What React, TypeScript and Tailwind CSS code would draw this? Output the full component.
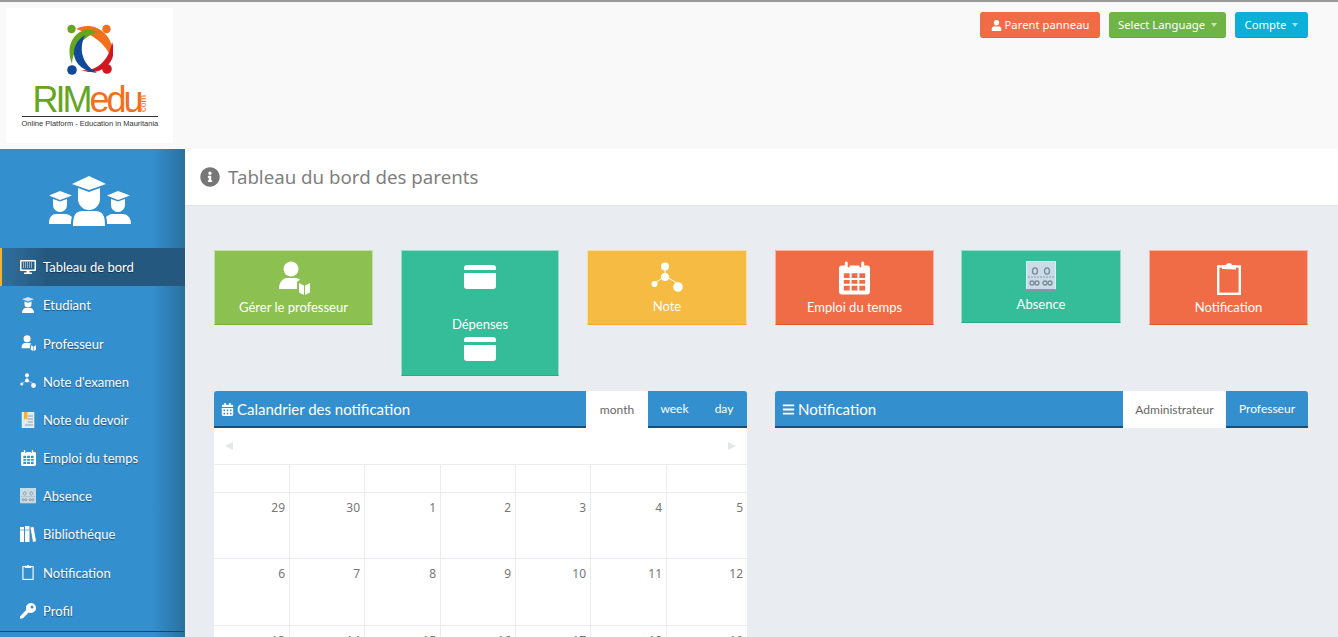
import React from "react";
import { FaInfoCircle, FaUser, FaBars, FaCalendarAlt } from "react-icons/fa";

type IconProps = { className?: string };

const PersonBook = ({ className }: IconProps) => (
  <svg viewBox="0 0 32 34" className={className} fill="currentColor">
    <circle cx="13" cy="8" r="7.5" />
    <path d="M1 28c0-7 4-11 8-11h8c2 0 4 .6 5 1.600l-3 2.400v7H1z" />
    <path d="M21 22l5 2.600V34l-5-2.600z" />
    <path d="M27 24.600l5-2.600v9.400L27 34z" />
  </svg>
);

const Card = ({ className }: IconProps) => (
  <svg viewBox="0 0 32 24" className={className} fill="currentColor">
    <path d="M3 0h26a3 3 0 0 1 3 3v2H0V3a3 3 0 0 1 3-3z" />
    <path d="M0 8h32v13a3 3 0 0 1-3 3H3a3 3 0 0 1-3-3z" />
  </svg>
);

const Nodes = ({ className }: IconProps) => (
  <svg viewBox="0 0 32 32" className={className} fill="currentColor" stroke="currentColor">
    <path d="M14 5v12M14 14L4 21M14 14l12 7" strokeWidth="1" fill="none" />
    <circle cx="14" cy="4.500" r="4" stroke="none" />
    <circle cx="14" cy="15" r="4" stroke="none" />
    <circle cx="3.500" cy="22" r="3" stroke="none" />
    <circle cx="27" cy="25" r="4.800" stroke="none" />
  </svg>
);

const Calendar = ({ className }: IconProps) => (
  <svg viewBox="0 0 32 34" className={className}>
    <path fill="currentColor" fillRule="evenodd" d="M3 4h3V1.500a1.500 1.500 0 0 1 3 0V6h2V4h10v2h2V1.500a1.500 1.500 0 0 1 3 0V4h3a3 3 0 0 1 3 3v24a3 3 0 0 1-3 3H3a3 3 0 0 1-3-3V7a3 3 0 0 1 3-3zM5 12v5h6v-5zm8 0v5h6v-5zm8 0v5h6v-5zM5 19v4h6v-4zm8 0v4h6v-4zm8 0v4h6v-4zM5 25v5h6v-5zm8 0v5h6v-5zm8 0v5h6v-5z" />
  </svg>
);

const Clipboard = ({ className }: IconProps) => (
  <svg viewBox="0 0 24 34" className={className} fill="none" stroke="currentColor">
    <rect x="1.200" y="5.500" width="21.600" height="27.300" strokeWidth="2.400" />
    <path d="M6 7V5h3.500a2.600 2.600 0 0 1 5 0H18v2.500z" fill="currentColor" strokeWidth="2" />
  </svg>
);

const AbsenceIcon = ({ className }: IconProps) => (
  <svg viewBox="0 0 30 30" className={className}>
    <rect x="0.500" y="0.500" width="29" height="29" fill="#c9dce8" stroke="#dcecf5" />
    <rect x="0" y="28" width="30" height="2" fill="#7f9aa8" />
    <g fill="none" stroke="#7a8a94" strokeWidth="1.300">
      <ellipse cx="9" cy="10" rx="2.500" ry="3.200" />
      <ellipse cx="21" cy="10" rx="2.500" ry="3.200" />
      <circle cx="6" cy="22" r="2" />
      <circle cx="11" cy="22" r="2" />
      <circle cx="19" cy="22" r="2" />
      <circle cx="24" cy="22" r="2" />
    </g>
    <path d="M2 16h26" stroke="#9eb2bd" strokeWidth="1.500" strokeDasharray="2 1" />
  </svg>
);

const Monitor = ({ className }: IconProps) => (
  <svg viewBox="0 0 16 16" className={className}>
    <path fill="currentColor" fillRule="evenodd" d="M1 1h14a1 1 0 0 1 1 1v9a1 1 0 0 1-1 1H9.500v1.500H12V15H4v-1.500h2.500V12H1a1 1 0 0 1-1-1V2a1 1 0 0 1 1-1zm.5 1.500v8h13v-8z" />
    <path stroke="currentColor" strokeWidth="1" strokeDasharray="1 1" d="M3 4h10M3 6h10M3 8h10" />
  </svg>
);

const Student = ({ className }: IconProps) => (
  <svg viewBox="0 0 14 16" className={className} fill="currentColor">
    <path d="M7 0l6 2.300-6 2.300-6-2.300z" opacity=".75" />
    <path d="M3.500 4.500L7 5.800l3.500-1.300V7a3.500 3.500 0 0 1-7 0z" />
    <path d="M1 16c0-3 1.500-5 4-5h4c2.500 0 4 2 4 5z" />
  </svg>
);

const NoteBook = ({ className }: IconProps) => (
  <svg viewBox="0 0 14 16" className={className}>
    <rect x="1" y="0" width="12" height="16" fill="#dfeaf2" stroke="#ffffff" strokeWidth=".5" />
    <path d="M7 4h5M7 7h5M7 10h5M4 13h8" stroke="#8fa3b0" strokeWidth="1" />
    <path d="M3 0h3.500v8L4.700 6.500 3 8z" fill="#f0b432" />
  </svg>
);

const Books = ({ className }: IconProps) => (
  <svg viewBox="0 0 16 16" className={className} fill="currentColor">
    <rect x="0" y="1" width="4" height="15" />
    <rect x="5" y="0" width="4.500" height="16" />
    <path d="M10.500 1.500l3-.8 2.500 14.500-3 .8z" />
    <path d="M0 4h4M5 4h4.500" stroke="#348fcf" strokeWidth=".7" />
  </svg>
);

const Key = ({ className }: IconProps) => (
  <svg viewBox="0 0 16 16" className={className} fill="currentColor">
    <path fillRule="evenodd" d="M11 0a5 5 0 1 1-2.300 9.400L3.200 15 .3 16 0 13.500 6.300 6.800A5 5 0 0 1 11 0zm1 2.500a1.500 1.500 0 1 0 0 3 1.500 1.500 0 0 0 0-3z" />
  </svg>
);

const Graduates = ({ className }: IconProps) => (
  <svg viewBox="0 0 82 50" className={className} fill="#ffffff">
    <path d="M40 0l17 8-17 6-17-6z" />
    <path d="M29 12l11 4 11-4v11a11 11 0 0 1-22 0z" />
    <path d="M24 50c0-10 2-15 10-15h12c8 0 10 5 10 15z" />
    <path d="M11 15l12 4.500L11 24 0 19.500z" />
    <path d="M4 23l7 2.500 7-2.500v6a7 7 0 0 1-14 0z" />
    <path d="M0 48c0-7 3-10 7-10h8c3 0 5 .5 8 3-1 2-1 5-1 7z" />
    <path d="M69 15l12 4.500L69 24l-11-4.500z" />
    <path d="M62 23l7 2.500 7-2.500v6a7 7 0 0 1-14 0z" />
    <path d="M58 48c0-2 0-5-1-7 3-2.500 5-3 8-3h8c5 0 9 3 9 10z" />
  </svg>
);

const Logo = () => (
  <div className="relative flex h-[135px] w-[167px] flex-col items-center bg-white pt-[16px]">
    <svg viewBox="0 0 46 52" className="h-[52px] w-[46px]">
      <path fill="#f0701c" d="M9 5C26-5 50 10 45 36 40 22 30 12 9 5z" />
      <path fill="#66a61e" d="M30 8C13-1-4 18 5 40 6 30 10 16 30 8z" />
      <path fill="#d3151f" d="M45 18c7 20-11 36-31 28 14 2 28-8 31-28z" />
      <path fill="#12489a" d="M18 11C0 22 4 46 30 49 18 42 10 28 18 11z" />
      <circle cx="4.500" cy="5" r="4.200" fill="#66a61e" />
      <circle cx="39.500" cy="5" r="4.200" fill="#f0701c" />
      <circle cx="5" cy="46" r="4.800" fill="#12489a" />
      <circle cx="40" cy="45" r="4.800" fill="#d3151f" />
    </svg>
    <div className="mt-[9px] flex h-[30px] w-[136px] items-end pl-[11px] font-['Liberation_Sans',sans-serif] text-[36px] leading-[30px] tracking-[-3px]">
      <span className="text-[#66a61e]">RIM</span>
      <span className="text-[#f0701c]">edu</span>
    </div>
    <span className="absolute top-[90px] left-[129px] rotate-[-90deg] font-['Liberation_Sans',sans-serif] text-[9px] leading-[11px] text-[#f0701c]">com</span>
    <div className="mt-[1px] w-[136px] border-t border-[#333333] pt-[2px] text-center font-['Liberation_Sans',sans-serif] text-[7.500px] leading-[10px] whitespace-nowrap text-[#333333]">
      Online Platform - Education in Mauritania
    </div>
  </div>
);

const navItems: { label: string; icon: React.ReactNode; active?: boolean }[] = [
  { label: "Tableau de bord", icon: <Monitor className="h-[16px] w-[16px]" />, active: true },
  { label: "Etudiant", icon: <Student className="h-[16px] w-[14px]" /> },
  { label: "Professeur", icon: <PersonBook className="h-[16px] w-[15px]" /> },
  { label: "Note d'examen", icon: <Nodes className="h-[16px] w-[16px]" /> },
  { label: "Note du devoir", icon: <NoteBook className="h-[16px] w-[14px]" /> },
  { label: "Emploi du temps", icon: <Calendar className="h-[16px] w-[15px]" /> },
  { label: "Absence", icon: <AbsenceIcon className="h-[16px] w-[16px]" /> },
  { label: "Bibliothéque", icon: <Books className="h-[16px] w-[16px]" /> },
  { label: "Notification", icon: <Clipboard className="h-[16px] w-[12px]" /> },
  { label: "Profil", icon: <Key className="h-[16px] w-[16px]" /> },
];

const Sidebar = () => (
  <aside className="flex h-[488px] w-[185px] shrink-0 flex-col bg-gradient-to-r from-[#348fcf] from-[82%] to-[#2a709f] font-['Lato',sans-serif] text-[13px] text-white [text-shadow:0_1px_1px_rgba(0,0,0,0.45)]">
    <div className="flex h-[99px] items-start justify-center pt-[27px] pr-[5px]">
      <Graduates className="h-[50px] w-[82px]" />
    </div>
    <ul className="flex flex-col">
      {navItems.map((item) => (
        <li
          key={item.label}
          className={
            item.active
              ? "flex h-[38px] items-center gap-[7px] border-l-2 border-[#f0b432] bg-gradient-to-r from-[#2f6f9e] from-0% to-[#25587f] to-25% pl-[18px]"
              : "flex h-[38.200px] items-center gap-[7px] pl-[20px]"
          }
        >
          <span className="flex w-[16px] justify-center">{item.icon}</span>
          <span className="pt-[2px] whitespace-nowrap">{item.label}</span>
        </li>
      ))}
    </ul>
    <div className="mt-[1px] mr-[1px] h-px bg-[#15486f]" />
  </aside>
);

const TileLabel = ({ children }: { children: React.ReactNode }) => (
  <span className="mt-[3px] text-[13px] leading-[18px] whitespace-nowrap">{children}</span>
);

const baseTile =
  "flex shrink-0 flex-col items-center border border-[#ffffff80] text-white font-['Lato',sans-serif]";

const Tiles = () => (
  <div className="flex items-start gap-[28px]">
    <div className={`${baseTile} h-[75px] w-[159px] border-b-[#74b13a] bg-[#8cc152] pt-[10px]`}>
      <PersonBook className="h-[34px] w-[32px]" />
      <TileLabel>Gérer le professeur</TileLabel>
    </div>
    <div className={`${baseTile} h-[126px] w-[158px] border-b-[#21ad88] bg-[#35bc98] pt-[14px]`}>
      <Card className="h-[24px] w-[32px]" />
      <span className="mt-[26px] text-[13px] leading-[18px]">Dépenses</span>
      <Card className="mt-[4px] h-[24px] w-[32px]" />
    </div>
    <div className={`${baseTile} h-[75px] w-[160px] border-b-[#f2ac1c] bg-[#f6bb42] pt-[11px]`}>
      <Nodes className="h-[32px] w-[32px]" />
      <TileLabel>Note</TileLabel>
    </div>
    <div className={`${baseTile} h-[75px] w-[159px] border-b-[#e9522a] bg-[#f06c47] pt-[10px]`}>
      <Calendar className="h-[34px] w-[31px]" />
      <TileLabel>Emploi du temps</TileLabel>
    </div>
    <div className={`${baseTile} -ml-px h-[73px] w-[160px] border-b-[#21ad88] bg-[#35bc98] pt-[10px]`}>
      <AbsenceIcon className="h-[30px] w-[30px]" />
      <span className="mt-[4px] text-[13px] leading-[18px]">Absence</span>
    </div>
    <div className={`${baseTile} h-[75px] w-[159px] border-b-[#e9522a] bg-[#f06c47] pt-[10px]`}>
      <Clipboard className="h-[34px] w-[24px]" />
      <TileLabel>Notification</TileLabel>
    </div>
  </div>
);

const PanelHead = ({
  icon,
  title,
  tabs,
}: {
  icon: React.ReactNode;
  title: string;
  tabs: { label: string; width: string; active?: boolean }[];
}) => (
  <div className="flex h-[37px] items-stretch font-['Lato',sans-serif]">
    <div className="flex flex-1 items-center gap-[3px] rounded-tl-[3px] border-b-2 border-[#0f5282] bg-[#348fcf] pt-px pl-[7px] text-[15px] text-white">
      {icon}
      <span className="whitespace-nowrap">{title}</span>
    </div>
    {tabs.map((t) => (
      <div
        key={t.label}
        className={
          t.active
            ? `flex items-center justify-center bg-white text-[12px] text-[#666666] ${t.width}`
            : `flex items-center justify-center border-b-2 border-[#0f5282] bg-[#348fcf] text-[12px] text-white last:rounded-tr-[3px] ${t.width}`
        }
      >
        {t.label}
      </div>
    ))}
  </div>
);

const columnTemplate = "grid grid-cols-[76px_75px_76px_75px_75px_76px_80px]";

const CalendarRow = ({ days, height }: { days: (number | string)[]; height: string }) => (
  <div className={`${columnTemplate} border-b border-[#e9edf2] ${height}`}>
    {days.map((d, i) => (
      <div key={i} className="border-r border-[#e9edf2] pt-[6px] pr-[4px] text-right text-[12px] leading-[17px] text-[#777777] last:border-r-0">
        {d}
      </div>
    ))}
  </div>
);

const CalendarPanel = () => (
  <section className="w-[533px]">
    <PanelHead
      icon={<FaCalendarAlt className="h-[13px] w-[13px]" />}
      title="Calandrier des notification"
      tabs={[
        { label: "month", width: "w-[62px]", active: true },
        { label: "week", width: "w-[53px]" },
        { label: "day", width: "w-[46px]" },
      ]}
    />
    <div className="bg-white font-['Noto_Sans',sans-serif]">
      <div className="flex h-[37px] items-center justify-between border-b border-[#e9edf2] px-[11px]">
        <span className="h-0 w-0 border-y-[4.500px] border-r-[8px] border-y-transparent border-r-[#e3e6ea]" />
        <span className="h-0 w-0 border-y-[4.500px] border-l-[8px] border-y-transparent border-l-[#e3e6ea]" />
      </div>
      <CalendarRow days={["", "", "", "", "", "", ""]} height="h-[28px]" />
      <CalendarRow days={[29, 30, 1, 2, 3, 4, 5]} height="h-[66px]" />
      <CalendarRow days={[6, 7, 8, 9, 10, 11, 12]} height="h-[67px]" />
      <CalendarRow days={[13, 14, 15, 16, 17, 18, 19]} height="h-[66px]" />
    </div>
  </section>
);

const NotificationPanel = () => (
  <section className="w-[533px]">
    <PanelHead
      icon={<FaBars className="h-[13px] w-[13px]" />}
      title="Notification"
      tabs={[
        { label: "Administrateur", width: "w-[103px]", active: true },
        { label: "Professeur", width: "w-[82px]" },
      ]}
    />
  </section>
);

const TopButtons = () => (
  <div className="flex gap-[9px] pt-[10px] pr-[30px] font-['Noto_Sans',sans-serif] text-[11.300px] text-white">
    <div className="flex h-[26px] w-[120px] items-center justify-center gap-[3px] rounded-[3px] border-b border-[#e9603a] bg-[#f16c46] pt-px">
      <FaUser className="h-[11px] w-[11px]" />
      <span>Parent panneau</span>
    </div>
    <div className="flex h-[26px] w-[117px] items-center justify-center gap-[6px] rounded-[3px] border-b border-[#63a63a] bg-[#70b445] pt-px">
      <span>Select Language</span>
      <span className="h-0 w-0 border-x-[3.500px] border-t-[4px] border-x-transparent border-t-[#ffffffa0]" />
    </div>
    <div className="flex h-[26px] w-[73px] items-center justify-center gap-[6px] rounded-[3px] border-b border-[#0a9fc5] bg-[#0bafd7] pt-px">
      <span>Compte</span>
      <span className="h-0 w-0 border-x-[3.500px] border-t-[4px] border-x-transparent border-t-[#ffffffa0]" />
    </div>
  </div>
);

export default function App() {
  return (
    <div className="h-[637px] w-[1338px] overflow-hidden bg-[#e9edf2]">
      <header className="flex h-[149px] justify-between border-t-2 border-[#9a9a9a] bg-[#f9f9f9]">
        <div className="pt-[6px] pl-[6px]">
          <Logo />
        </div>
        <TopButtons />
      </header>
      <div className="flex">
        <Sidebar />
        <main className="min-w-0 flex-1">
          <div className="flex h-[57px] items-center gap-[8px] border-b border-[#e2e5e9] bg-white pr-[2px] pl-[15px] font-['Noto_Sans',sans-serif] text-[18.700px] text-[#7f7f7f]">
            <FaInfoCircle className="h-[20px] w-[20px] text-[#777777]" />
            <span>Tableau du bord des parents</span>
          </div>
          <div className="pt-[44px] pr-[30px] pl-[29px]">
            <Tiles />
            <div className="mt-[15px] flex justify-between">
              <CalendarPanel />
              <NotificationPanel />
            </div>
          </div>
        </main>
      </div>
    </div>
  );
}
